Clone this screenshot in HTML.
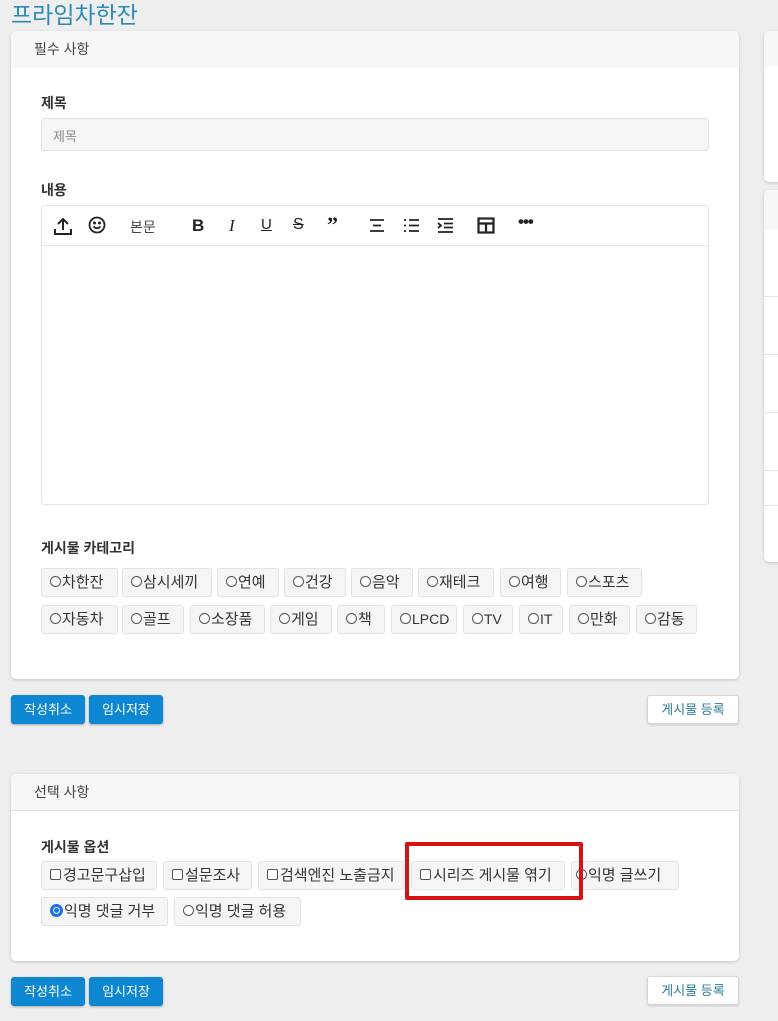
<!DOCTYPE html>
<html><head><meta charset="utf-8"><style>
*{box-sizing:border-box;margin:0;padding:0}
body{width:778px;height:1021px;background:#eeeeee;font-family:"Liberation Sans","Noto Sans CJK KR",sans-serif;position:relative;overflow:hidden;color:#333}
.abs{position:absolute}
.card{position:absolute;background:#fff;border-radius:5px;box-shadow:0 1px 3px rgba(0,0,0,.18);overflow:hidden}
.hdr{position:absolute;left:0;right:0;top:0;height:37px;background:#f7f7f7;font-size:14px;color:#444;padding:8px 0 0 23px}
.lbl{position:absolute;font-size:14px;font-weight:bold;color:#333}
.chip{position:absolute;height:29px;background:#f5f5f5;border:1px solid #e3e3e3;border-radius:3px;font-size:15px;line-height:27px;padding-left:8px;color:#333;white-space:nowrap;overflow:hidden}
.r{display:inline-block;width:11px;height:11px;border:1px solid #555;border-radius:50%;vertical-align:0;margin-right:1px;background:#fff}
.c{display:inline-block;width:11px;height:11px;border:1px solid #555;border-radius:2px;vertical-align:0;margin-right:2px;background:#fff}
.btn{position:absolute;height:29px;background:#0d87d2;color:#fff;border-radius:3px;font-size:13px;text-align:center;line-height:29px;box-shadow:0 1px 2px rgba(0,0,0,.3)}
.wbtn{position:absolute;height:29px;background:#fff;color:#2a7c94;border:1px solid #d6d6d6;border-radius:3px;font-size:13px;text-align:center;line-height:27px;box-shadow:0 1px 2px rgba(0,0,0,.15)}
.tb{position:absolute;top:10px;font-size:17px;color:#222}
</style></head><body>
<div class="abs" style="left:11px;top:-4px;font-size:23px;color:#2b8bb6">프라임차한잔</div>

<div class="card" style="left:764px;top:31px;width:30px;height:151px"><div class="hdr" style="height:35px"></div></div>
<div class="card" style="left:764px;top:190px;width:30px;height:372px"><div class="hdr" style="height:40px"></div>
<div class="abs" style="left:0;right:0;top:106px;border-top:1px solid #e6e6e6"></div>
<div class="abs" style="left:0;right:0;top:164px;border-top:1px solid #e6e6e6"></div>
<div class="abs" style="left:0;right:0;top:222px;border-top:1px solid #e6e6e6"></div>
<div class="abs" style="left:0;right:0;top:280px;border-top:1px solid #e6e6e6"></div>
<div class="abs" style="left:0;right:0;top:315px;border-top:1px solid #e6e6e6"></div>
</div>

<div class="card" style="left:11px;top:31px;width:728px;height:648px">
<div class="hdr">필수 사항</div>
<div class="lbl" style="left:30px;top:62px">제목</div>
<div class="abs" style="left:30px;top:87px;width:668px;height:33px;background:#f5f5f5;border:1px solid #e2e2e2;border-radius:3px;font-size:13px;color:#888;padding:7px 0 0 11px">제목</div>
<div class="lbl" style="left:30px;top:149px">내용</div>
<div class="abs" style="left:30px;top:174px;width:668px;height:300px;border:1px solid #e2e2e2;border-radius:4px">
 <div class="abs" style="left:0;right:0;top:39px;border-top:1px solid #e6e6e6"></div>
 <svg class="abs" style="left:11px;top:10px" width="20" height="20" viewBox="0 0 20 20" fill="none" stroke="#222" stroke-width="2"><path d="M10 14V3M5 8l5-5 5 5M2 13v5h16v-5"/></svg>
 <svg class="abs" style="left:46px;top:10px" width="18" height="18" viewBox="0 0 18 18" fill="none" stroke="#222" stroke-width="1.8"><circle cx="9" cy="9" r="7.5"/><circle cx="6.5" cy="7" r=".6" fill="#222"/><circle cx="11.5" cy="7" r=".6" fill="#222"/><path d="M5.5 10.5q3.5 3.5 7 0" /></svg>
 <div class="tb" style="left:88px;top:11px;font-size:14px;color:#444">본문</div>
 <div class="tb" style="left:150px;font-weight:bold">B</div>
 <div class="tb" style="left:187px;font-family:'Liberation Serif',serif;font-style:italic">I</div>
 <div class="tb" style="left:219px;text-decoration:underline;font-size:15px">U</div>
 <div class="tb" style="left:251px;text-decoration:line-through;font-size:16px">S</div>
 <div class="tb" style="left:285px;font-weight:bold;font-size:22px;top:6px;font-family:'Liberation Serif',serif">”</div>
 <svg class="abs" style="left:327px;top:12px" width="16" height="15" stroke="#222" stroke-width="1.8"><path d="M1 2h14M4 7.5h8M1 13h14"/></svg>
 <svg class="abs" style="left:361px;top:12px" width="16" height="15" stroke="#222" stroke-width="1.8"><path d="M1 2h2M1 7.5h2M1 13h2M6 2h10M6 7.5h10M6 13h10"/></svg>
 <svg class="abs" style="left:395px;top:12px" width="16" height="15" stroke="#222" stroke-width="1.8" fill="none"><path d="M1 1h15M7 5.5h9M7 9.5h9M1 14h15M1 5l3 2.5-3 2.5"/></svg>
 <svg class="abs" style="left:435px;top:11px" width="18" height="17" stroke="#222" stroke-width="2.2" fill="none"><rect x="1.5" y="1.5" width="15" height="14"/><path d="M1.5 6.5h15M9 6.5v9"/></svg>
 <div class="tb" style="left:476px;top:6px;font-weight:bold;letter-spacing:-1px">•••</div>
</div>
<div class="lbl" style="left:30px;top:507px">게시물 카테고리</div>
<div class="chip" style="left:30px;top:537px;width:77px"><span class="r"></span>차한잔</div>
<div class="chip" style="left:111px;top:537px;width:90px"><span class="r"></span>삼시세끼</div>
<div class="chip" style="left:206px;top:537px;width:62px"><span class="r"></span>연예</div>
<div class="chip" style="left:273px;top:537px;width:62px"><span class="r"></span>건강</div>
<div class="chip" style="left:340px;top:537px;width:62px"><span class="r"></span>음악</div>
<div class="chip" style="left:407px;top:537px;width:76px"><span class="r"></span>재테크</div>
<div class="chip" style="left:489px;top:537px;width:61px"><span class="r"></span>여행</div>
<div class="chip" style="left:556px;top:537px;width:75px"><span class="r"></span>스포츠</div>
<div class="chip" style="left:30px;top:574px;width:77px"><span class="r"></span>자동차</div>
<div class="chip" style="left:111px;top:574px;width:62px"><span class="r"></span>골프</div>
<div class="chip" style="left:179px;top:574px;width:75px"><span class="r"></span>소장품</div>
<div class="chip" style="left:259px;top:574px;width:62px"><span class="r"></span>게임</div>
<div class="chip" style="left:326px;top:574px;width:48px"><span class="r"></span>책</div>
<div class="chip" style="left:380px;top:574px;width:66px;font-size:14px"><span class="r"></span>LPCD</div>
<div class="chip" style="left:452px;top:574px;width:50px;font-size:14px"><span class="r"></span>TV</div>
<div class="chip" style="left:508px;top:574px;width:44px;font-size:14px"><span class="r"></span>IT</div>
<div class="chip" style="left:558px;top:574px;width:61px"><span class="r"></span>만화</div>
<div class="chip" style="left:625px;top:574px;width:61px"><span class="r"></span>감동</div>
</div>

<div class="btn" style="left:11px;top:695px;width:74px">작성취소</div>
<div class="btn" style="left:89px;top:695px;width:74px">임시저장</div>
<div class="wbtn" style="left:647px;top:695px;width:92px">게시물 등록</div>

<div class="card" style="left:11px;top:774px;width:728px;height:187px">
<div class="hdr" style="border-bottom:1px solid #dedede">선택 사항</div>
<div class="lbl" style="left:30px;top:63px">게시물 옵션</div>
<div class="chip" style="left:30px;top:87px;width:116px"><span class="c"></span>경고문구삽입</div>
<div class="chip" style="left:152px;top:87px;width:89px"><span class="c"></span>설문조사</div>
<div class="chip" style="left:247px;top:87px;width:146px"><span class="c"></span>검색엔진 노출금지</div>
<div class="chip" style="left:400px;top:87px;width:154px"><span class="c"></span>시리즈 게시물 엮기</div>
<div class="chip" style="left:560px;top:87px;width:108px;padding-left:4px"><span class="r"></span>익명 글쓰기</div>
<div class="chip" style="left:30px;top:123px;width:127px"><span class="r" style="border:3px solid #1a73e8;box-shadow:inset 0 0 0 1px #fff;background:#1a73e8;width:13px;height:13px;vertical-align:-1px"></span>익명 댓글 거부</div>
<div class="chip" style="left:163px;top:123px;width:127px"><span class="r"></span>익명 댓글 허용</div>
</div>
<div class="abs" style="left:405px;top:842px;width:178px;height:58px;border:4px solid #d61313;border-radius:2px"></div>

<div class="btn" style="left:11px;top:977px;width:74px">작성취소</div>
<div class="btn" style="left:89px;top:977px;width:74px">임시저장</div>
<div class="wbtn" style="left:647px;top:976px;width:92px">게시물 등록</div>
</body></html>
